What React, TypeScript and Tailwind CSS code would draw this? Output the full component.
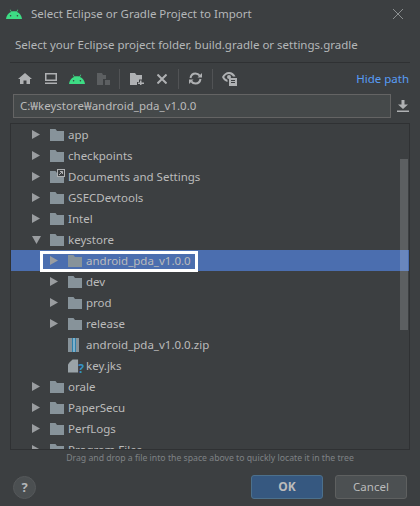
function Android({ className }: { className: string }) {
  return (
    <svg viewBox="0 0 16 10" className={className} fill="#3ddc84">
      <path d="M0 10C0.3 6.600 2.200 4 5 2.900L3.800 0.800l0.500-0.300L5.600 2.600C7.200 2 8.800 2 10.400 2.600L11.700 0.500l0.500 0.300L11 2.900C13.800 4 15.700 6.600 16 10Z" />
      <circle cx="4.600" cy="6.800" r="0.800" fill="#3c3f41" />
      <circle cx="11.400" cy="6.800" r="0.800" fill="#3c3f41" />
    </svg>
  );
}

function Folder({ shortcut }: { shortcut?: boolean }) {
  return (
    <span className="relative w-[14px] h-[12px] shrink-0">
      <svg viewBox="0 0 14 12" className="w-[14px] h-[12px] block" fill="#87939a">
        <path d="M0 0h5.500l1.500 2h7v10H0Z" />
      </svg>
      {shortcut && (
        <svg viewBox="0 0 8 8" className="absolute right-[-1px] top-[-2px] w-[8px] h-[8px]">
          <rect x="0.500" y="0.500" width="7" height="7" fill="#3c3f41" stroke="#afb1b3" />
          <path d="M2 6l3.500-3.500M3 2.500h2.500V5" stroke="#afb1b3" fill="none" />
        </svg>
      )}
    </span>
  );
}

function Arrow({ dir }: { dir: "right" | "down" | "none" }) {
  if (dir === "none") return null;
  if (dir === "down") {
    return (
      <svg viewBox="0 0 9 8" className="w-[9px] h-[8px]" fill="#9a9da0">
        <path d="M0 0h9L4.500 8Z" />
      </svg>
    );
  }
  return (
    <svg viewBox="0 0 8 9" className="w-[8px] h-[9px]" fill="#9a9da0">
      <path d="M0 0l8 4.500L0 9Z" />
    </svg>
  );
}

function ZipIcon() {
  return (
    <svg viewBox="0 0 11 14" className="w-[11px] h-[14px] shrink-0">
      <rect x="0" y="0" width="11" height="14" fill="#87939a" />
      <rect x="4" y="0" width="4" height="14" fill="#2f7fa8" />
      <path d="M5 1h2M5 3h2M5 5h2M5 7h2M5 9h2M5 11h2M5 13h2" stroke="#cfe3ee" strokeWidth="1" />
    </svg>
  );
}

function KeyIcon() {
  return (
    <span className="relative w-[12px] h-[14px] shrink-0">
      <svg viewBox="0 0 12 14" className="w-[11px] h-[14px] block" fill="#9aa3a8">
        <path d="M5 0h6v14H0V5Z" />
        <path d="M4 1v3H1Z" />
      </svg>
      <span className="absolute right-[-4px] bottom-[-3px] text-[12px] leading-[14px] font-bold text-[#3592c4]">?</span>
    </span>
  );
}

type Row = {
  name: string;
  depth: 0 | 1;
  arrow: "right" | "down" | "none";
  icon?: "zip" | "key";
  shortcut?: boolean;
  selected?: boolean;
};

const rows: Row[] = [
  { name: "app", depth: 0, arrow: "right" },
  { name: "checkpoints", depth: 0, arrow: "right" },
  { name: "Documents and Settings", depth: 0, arrow: "right", shortcut: true },
  { name: "GSECDevtools", depth: 0, arrow: "right" },
  { name: "Intel", depth: 0, arrow: "right" },
  { name: "keystore", depth: 0, arrow: "down" },
  { name: "android_pda_v1.0.0", depth: 1, arrow: "right", selected: true },
  { name: "dev", depth: 1, arrow: "right" },
  { name: "prod", depth: 1, arrow: "right" },
  { name: "release", depth: 1, arrow: "right" },
  { name: "android_pda_v1.0.0.zip", depth: 1, arrow: "none", icon: "zip" },
  { name: "key.jks", depth: 1, arrow: "none", icon: "key" },
  { name: "orale", depth: 0, arrow: "right" },
  { name: "PaperSecu", depth: 0, arrow: "right" },
  { name: "PerfLogs", depth: 0, arrow: "right" },
  { name: "Program Files", depth: 0, arrow: "right" },
];

function TreeRow({ row }: { row: Row }) {
  return (
    <div
      className={
        row.selected
          ? "h-[21px] shrink-0 flex items-center bg-[#4b6eaf] relative"
          : "h-[21px] shrink-0 flex items-center"
      }
    >
      <div className={row.depth === 1 ? "w-[39px] shrink-0" : "w-[21px] shrink-0"} />
      <div className="w-[18px] shrink-0 flex items-center">
        <Arrow dir={row.arrow} />
      </div>
      <div className="w-[18px] shrink-0 flex items-center">
        {row.icon === "zip" ? <ZipIcon /> : row.icon === "key" ? <KeyIcon /> : <Folder shortcut={row.shortcut} />}
      </div>
      <span className="text-[11.5px] text-[#bbbbbb] whitespace-nowrap">{row.name}</span>
      {row.selected && (
        <div className="absolute left-[29px] top-[1px] w-[158px] h-[21px] border-[3px] border-white" />
      )}
    </div>
  );
}

export default function App() {
  return (
    <div
      className="w-[420px] h-[506px] bg-[#3c3f41] flex flex-col overflow-hidden text-[#bbbbbb]"
      style={{ fontFamily: '"Noto Sans", "Liberation Sans", sans-serif' }}
    >
      {/* Title bar */}
      <div className="h-[28px] shrink-0 flex items-center pl-[6px] pr-[17px]">
        <Android className="w-[16px] h-[10px] mr-[9px]" />
        <span className="text-[11.5px] flex-1 text-[#b4b7b9]">Select Eclipse or Gradle Project to Import</span>
        <svg viewBox="0 0 10 10" className="w-[10px] h-[10px]" stroke="#a0a3a5" strokeWidth="0.800">
          <path d="M0 0l10 10M10 0L0 10" />
        </svg>
      </div>

      {/* Description */}
      <div className="h-[34px] shrink-0 flex items-center pl-[15px] text-[11.5px] text-[#b4b7b9]">
        Select your Eclipse project folder, build.gradle or settings.gradle
      </div>

      <div className="mx-[10px] h-px shrink-0 bg-[#2f3133]" />

      {/* Toolbar */}
      <div className="h-[31px] shrink-0 flex items-center pl-[18px] pr-[11px]">
        <svg viewBox="0 0 14 11" className="w-[14px] h-[11px]" fill="#afb1b3">
          <path d="M7 0l7 6h-2v5H8.500V7.500h-3V11H2V6H0Z" />
        </svg>
        <svg viewBox="0 0 12 11" className="w-[12px] h-[11px] ml-[13px]" fill="#afb1b3">
          <path d="M0 0h12v8H0ZM1.500 1.500v5h9v-5ZM0 9.500h12V11H0Z" fillRule="evenodd" />
        </svg>
        <Android className="w-[16px] h-[10px] ml-[12px]" />
        <svg viewBox="0 0 13 12" className="w-[13px] h-[12px] ml-[12px]" fill="#5c5f61">
          <path d="M0 0h5l1 2h3v4H6v6H0ZM8 7h5v5H8Z" />
        </svg>
        <div className="w-px h-[20px] bg-[#515355] ml-[9px]" />
        <svg viewBox="0 0 14 12" className="w-[14px] h-[12px] ml-[10px]" fill="#afb1b3">
          <path d="M0 0h5l1.500 2H12v4.500H9V9H7v3H0Z" />
          <path d="M10 7.500h1.500V9.500H14V11h-2.500v1H10v-1H8V9.500h2Z" />
        </svg>
        <svg viewBox="0 0 10 10" className="w-[10px] h-[10px] ml-[13px]" stroke="#afb1b3" strokeWidth="2">
          <path d="M0.500 0.500l9 9M9.500 0.500l-9 9" />
        </svg>
        <div className="w-px h-[20px] bg-[#515355] ml-[11px]" />
        <svg viewBox="0 0 13 13" className="w-[13px] h-[13px] ml-[10px]" fill="none" stroke="#afb1b3" strokeWidth="2">
          <path d="M1.500 6C2 3.200 4 1.500 6.500 1.500c1.800 0 3.200 0.800 4.200 2.200" />
          <path d="M11.500 7c-0.500 2.800-2.500 4.500-5 4.500-1.800 0-3.200-0.800-4.200-2.200" />
          <path d="M8.500 5.500H13V1Z" fill="#afb1b3" stroke="none" />
          <path d="M4.500 7.500H0V12Z" fill="#afb1b3" stroke="none" />
        </svg>
        <div className="w-px h-[20px] bg-[#515355] ml-[10px]" />
        <svg viewBox="0 0 15 14" className="w-[15px] h-[14px] ml-[9px]" fill="#afb1b3">
          <path d="M0 5C1.500 2 4 0 7 0s5.500 2 6.500 4.500H11C10 3 8.500 2 7 2 5 2 3.500 3.200 2.200 5 3 6.300 4 7.300 5.500 7.800V10C3 9.500 1 7.500 0 5Z" />
          <circle cx="7" cy="5" r="2" />
          <path d="M7 6h8v8H7ZM9 8v1h4V8ZM9 10v1h4v-1Z" fillRule="evenodd" />
        </svg>
        <span className="ml-auto text-[11.5px] text-[#589df6]">Hide path</span>
      </div>

      {/* Path field */}
      <div className="h-[24px] shrink-0 flex items-center pl-[13px]">
        <div className="w-[378px] h-[24px] bg-[#45494a] border border-[#646464] flex items-center pl-[6px] text-[11.5px] text-[#bbbbbb]">
          C:₩keystore₩android_pda_v1.0.0
        </div>
        <svg viewBox="0 0 12 12" className="w-[12px] h-[12px] ml-[6px]" fill="#afb1b3">
          <path d="M4.500 0h3v4.500H11L6 9 1 4.500h3.500ZM0 10.500h12V12H0Z" />
        </svg>
      </div>

      {/* Tree */}
      <div className="mt-[5px] ml-[10px] w-[400px] h-[327px] shrink-0 border border-[#2f3133] flex overflow-hidden relative">
        <div className="flex-1 flex flex-col min-w-0">
          {rows.map((row) => (
            <TreeRow key={row.name} row={row} />
          ))}
        </div>
        <div className="absolute right-[1px] top-[35px] w-[8px] h-[171px] bg-white/[0.17]" />
      </div>

      <div className="h-[15px] mt-[1px] shrink-0 flex items-center justify-center text-[8.7px] text-[#7f8285]">
        Drag and drop a file into the space above to quickly locate it in the tree
      </div>

      {/* Footer */}
      <div className="mt-[9px] flex items-start pl-[13px] pr-[13px]">
        <div className="w-[23px] h-[23px] mt-[1px] rounded-full bg-[#4b4f51] border border-[#55585a] flex items-center justify-center text-[13px] font-bold text-[#b4b7b9]">
          ?
        </div>
        <button className="ml-auto w-[72px] h-[24px] rounded-[3px] bg-[#365880] border border-[#4c708c] text-[12px] font-bold text-[#bbbbbb]">
          OK
        </button>
        <button className="ml-[12px] w-[72px] h-[24px] rounded-[3px] bg-[#4c5052] border border-[#5e6060] text-[11.5px] text-[#bbbbbb]">
          Cancel
        </button>
      </div>
    </div>
  );
}
